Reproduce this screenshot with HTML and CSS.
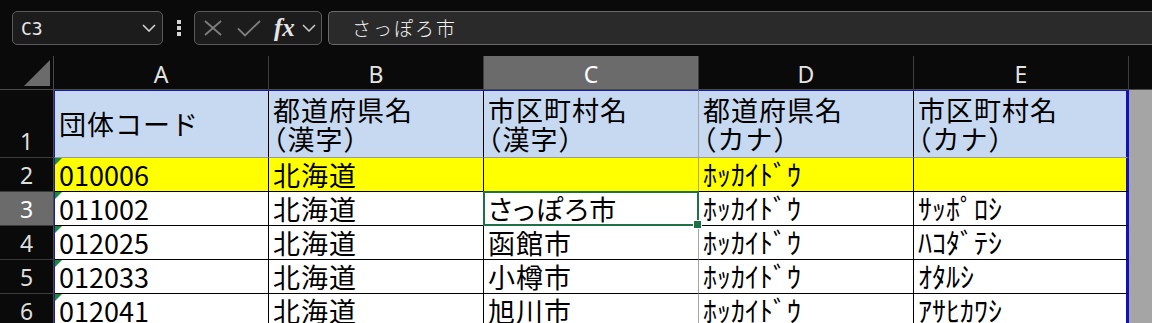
FILE: index.html
```html
<!DOCTYPE html>
<html lang="ja">
<head>
<meta charset="utf-8">
<title>Sheet</title>
<link rel="stylesheet" href="styles.css">
</head>
<body>
<div class="toolbar">
  <div class="namebox">
    <span class="nb-text">C3</span>
    <svg class="chev" width="14" height="8" viewBox="0 0 14 8"><polyline points="1,1 7,7 13,1" fill="none" stroke="#d0d0d0" stroke-width="1.6"/></svg>
  </div>
  <div class="sep-dots"><span></span><span></span><span></span></div>
  <div class="fxbox">
    <svg class="ic-x" width="18" height="16" viewBox="0 0 18 16"><path d="M1 1 L17 15 M17 1 L1 15" stroke="#7e7e7e" stroke-width="1.8" fill="none"/></svg>
    <svg class="ic-check" width="24" height="17" viewBox="0 0 24 17"><polyline points="1,8.5 8,15.5 23,1" fill="none" stroke="#7e7e7e" stroke-width="1.8"/></svg>
    <span class="fx">fx</span>
    <svg class="chev2" width="14" height="8" viewBox="0 0 14 8"><polyline points="1,1 7,7 13,1" fill="none" stroke="#c8c8c8" stroke-width="1.5"/></svg>
  </div>
  <div class="formula">さっぽろ市</div>
</div>

<div class="sheet">
  <div class="corner"><span class="tri"></span></div>
  <div class="colhead">A</div>
  <div class="colhead">B</div>
  <div class="colhead sel">C</div>
  <div class="colhead">D</div>
  <div class="colhead">E</div>
  <div class="colhead filler"></div>

  <div class="rowhead">1</div>
  <div class="cell h colA">団体コード</div>
  <div class="cell h">都道府県名<br>（漢字）</div>
  <div class="cell h colC">市区町村名<br>（漢字）</div>
  <div class="cell h">都道府県名<br>（カナ）</div>
  <div class="cell h colE">市区町村名<br>（カナ）</div>
  <div class="gray"></div>

  <div class="rowhead">2</div>
  <div class="cell y colA flag">010006</div>
  <div class="cell y jp">北海道</div>
  <div class="cell y colC"></div>
  <div class="cell y kana">ﾎｯｶｲﾄﾞｳ</div>
  <div class="cell y colE"></div>
  <div class="gray"></div>

  <div class="rowhead sel">3</div>
  <div class="cell colA flag">011002</div>
  <div class="cell jp">北海道</div>
  <div class="cell colC hira active">さっぽろ市</div>
  <div class="cell kana">ﾎｯｶｲﾄﾞｳ</div>
  <div class="cell colE kana">ｻｯﾎﾟﾛｼ</div>
  <div class="gray"></div>

  <div class="rowhead">4</div>
  <div class="cell colA flag">012025</div>
  <div class="cell jp">北海道</div>
  <div class="cell colC jp">函館市</div>
  <div class="cell kana">ﾎｯｶｲﾄﾞｳ</div>
  <div class="cell colE kana">ﾊｺﾀﾞﾃｼ</div>
  <div class="gray"></div>

  <div class="rowhead">5</div>
  <div class="cell colA flag">012033</div>
  <div class="cell jp">北海道</div>
  <div class="cell colC jp">小樽市</div>
  <div class="cell kana">ﾎｯｶｲﾄﾞｳ</div>
  <div class="cell colE kana">ｵﾀﾙｼ</div>
  <div class="gray"></div>

  <div class="rowhead">6</div>
  <div class="cell colA flag">012041</div>
  <div class="cell jp">北海道</div>
  <div class="cell colC jp">旭川市</div>
  <div class="cell kana">ﾎｯｶｲﾄﾞｳ</div>
  <div class="cell colE kana">ｱｻﾋｶﾜｼ</div>
  <div class="gray"></div>
</div>
</body>
</html>
```

FILE: styles.css
```css
* { box-sizing: border-box; }
html, body { margin: 0; padding: 0; }
body {
  background: #0a0a0a;
  width: 1152px;
  height: 323px;
  overflow: hidden;
  font-family: "Noto Sans CJK JP", "Noto Sans", sans-serif;
}

/* toolbar */
.toolbar {
  display: flex;
  align-items: flex-start;
  height: 56px;
  padding: 11px 0 0 12px;
}
.namebox {
  width: 151px;
  height: 34px;
  border: 1px solid #5a5a5a;
  border-radius: 5px;
  background: #1c1c1c;
  display: flex;
  align-items: center;
  justify-content: space-between;
  padding: 0 6px 0 8px;
}
.nb-text {
  font-family: "DejaVu Sans Mono", "Liberation Mono", monospace;
  font-size: 18px;
  color: #e8e8e8;
}
.sep-dots {
  width: 31px;
  height: 34px;
  display: flex;
  flex-direction: column;
  align-items: center;
  justify-content: center;
  gap: 2px;
}
.sep-dots span {
  width: 4px;
  height: 4px;
  background: #d4d4d4;
}
.fxbox {
  width: 128px;
  height: 34px;
  border: 1px solid #5a5a5a;
  border-radius: 5px;
  background: #1c1c1c;
  display: flex;
  align-items: center;
  padding-left: 9px;
}
.ic-x { margin-right: 15px; }
.ic-check { margin-right: 13px; }
.fx {
  font-family: "Liberation Serif", "DejaVu Serif", serif;
  font-style: italic;
  font-weight: bold;
  font-size: 25px;
  color: #e6e6e6;
  line-height: 1;
  margin-right: 7px;
  margin-top: -2px;
}
.formula {
  flex: 1;
  margin-left: 6px;
  height: 34px;
  border: 1px solid #6a6a6a;
  border-right: none;
  border-radius: 5px 0 0 5px;
  background: #2a2a2a;
  color: #f4f4f4;
  font-size: 19px;
  font-weight: 300;
  letter-spacing: 2px;
  padding-left: 23px;
  line-height: 32px;
}

/* sheet */
.sheet {
  display: grid;
  grid-template-columns: 54px 215px 215px 215px 215px 215px 1fr;
  grid-template-rows: 34px 68px repeat(5, 34px);
}
.corner {
  border-right: 1px solid #4a4a4a;
  border-bottom: 1px solid #4a4a4a;
  position: relative;
}
.tri {
  position: absolute;
  left: 24px;
  top: 4px;
  width: 26px;
  height: 26px;
  background: #6b6b6b;
  clip-path: polygon(100% 0, 100% 100%, 0 100%);
}
.colhead {
  border-right: 1px solid #3e3e3e;
  border-bottom: 1px solid #4a4a4a;
  color: #e4e4e4;
  font-family: "Noto Sans", "Liberation Sans", sans-serif;
  font-size: 23px;
  display: flex;
  align-items: center;
  justify-content: center;
  padding-top: 3px;
}
.colhead.sel {
  background: #6b6b6b;
  color: #ffffff;
}
.colhead.filler { border-right: none; }

.rowhead {
  border-right: 1px solid #4a4a4a;
  border-bottom: 1px solid #3a3a3a;
  color: #dedede;
  font-family: "Noto Sans", "Liberation Sans", sans-serif;
  font-size: 23px;
  display: flex;
  align-items: flex-end;
  justify-content: center;
  line-height: 1;
  padding-bottom: 4px;
}
.rowhead.sel {
  background: #6b6b6b;
  color: #ffffff;
}

.cell {
  background: #ffffff;
  border-right: 1px solid #000;
  border-bottom: 1px solid #000;
  color: #000;
  font-size: 27px;
  line-height: 33px;
  padding-left: 5px;
  white-space: nowrap;
  position: relative;
}
.cell.jp { letter-spacing: 1px; padding-left: 4px; }
.cell.hira { font-feature-settings: "palt"; letter-spacing: 1px; padding-left: 4px; }
.cell.kana { font-size: 28px; padding-left: 4px; }
.cell.h {
  background: #c6d9f1;
  border-top: 1px solid #1a1ab0;
  border-bottom-color: #9a9a9a;
  line-height: 29px;
  letter-spacing: 1px;
  font-feature-settings: "halt";
  display: flex;
  align-items: center;
  padding-bottom: 1px;
  padding-left: 4px;
}
.cell.y { background: #ffff00; }
.cell.colA { border-left: 1px solid #1a1ab0; padding-left: 4px; }
.cell.colC { border-right-color: #a6a6a6; }
.cell.colE { border-right: 3px solid #1010c0; }
.cell.flag::before {
  content: "";
  position: absolute;
  left: 0;
  top: 0;
  width: 7px;
  height: 7px;
  background: #1b8a35;
  clip-path: polygon(0 0, 100% 0, 0 100%);
}
.cell.active { z-index: 2; }
.cell.active::after {
  content: "";
  position: absolute;
  left: -1px;
  top: -1px;
  right: -1px;
  bottom: -1px;
  border: 2px solid #1e7145;
  pointer-events: none;
}
.cell.active::before {
  content: "";
  position: absolute;
  right: -4px;
  bottom: -4px;
  width: 7px;
  height: 7px;
  background: #1e7145;
  border: 1px solid #ffffff;
  z-index: 3;
}
.gray { background: #a5a5a5; }
```
